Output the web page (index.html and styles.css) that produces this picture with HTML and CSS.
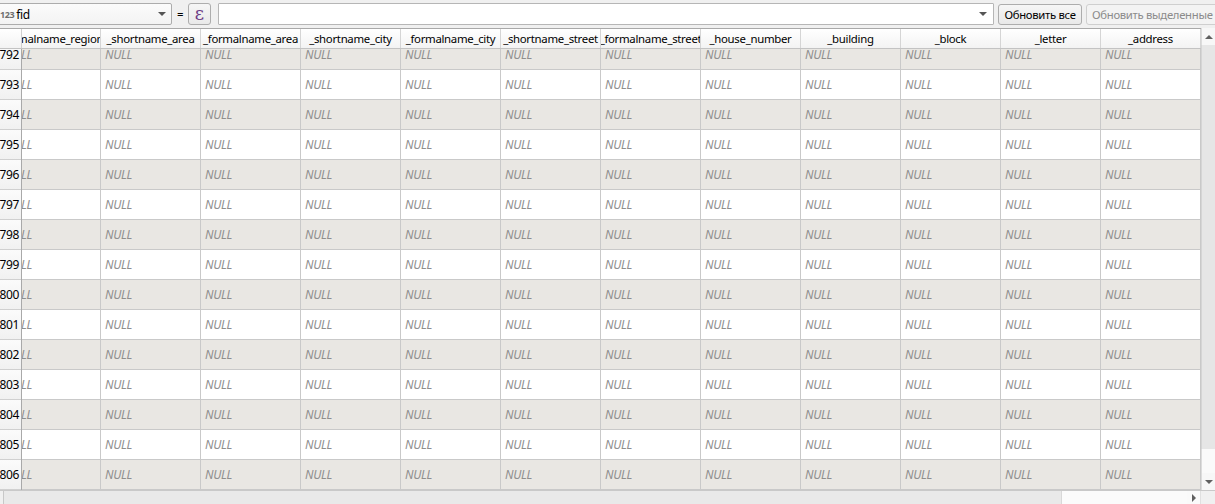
FILE: index.html
```html
<!DOCTYPE html>
<html>
<head>
<meta charset="utf-8">
<link rel="stylesheet" href="styles.css">
</head>
<body>
<div class="app">
  <div class="toolbar">
    <div class="combo field-combo">
      <span class="num">123</span><span class="fname">fid</span>
      <span class="arrow"></span>
    </div>
    <span class="eq">=</span>
    <div class="btn eps">ε</div>
    <div class="combo expr">
      <span class="arrow"></span>
    </div>
    <div class="btn upd all">Обновить все</div>
    <div class="btn upd disabled">Обновить выделенные</div>
  </div>
  <div class="table-area">
    <div class="grid">
      <div class="hdr-row">
        <div class="corner"></div>
        <div class="hdr-view">
          <div class="hdr-inner" id="hdr"></div>
        </div>
      </div>
      <div class="body">
        <div class="vhdr-view"><div class="vhdr-inner" id="vhdr"></div></div>
        <div class="data-view"><div class="data-inner" id="data"></div></div>
      </div>
    </div>
    <div class="vscroll">
      <div class="sb-btn up"><span class="tri-up"></span></div>
      <div class="vthumb"></div>
      <div class="vtrack"></div>
      <div class="sb-btn down"><span class="tri-down"></span></div>
    </div>
  </div>
  <div class="hscroll">
    <div class="hleft"></div>
    <div class="hthumb"></div>
    <div class="htrack"></div>
    <div class="sb-btn right"><span class="tri-right"></span></div>
    <div class="sb-corner"></div>
  </div>
</div>
<script src="app.js"></script>
</body>
</html>
```
FILE: app.js
```js
var cols = ["_formalname_region","_shortname_area","_formalname_area","_shortname_city","_formalname_city","_shortname_street","_formalname_street","_house_number","_building","_block","_letter","_address"];
var hdr = document.getElementById("hdr");
cols.forEach(function(c){
  var d = document.createElement("div");
  d.className = "hcell";
  d.innerHTML = "<span>" + c + "</span>";
  hdr.appendChild(d);
});
var vhdr = document.getElementById("vhdr");
var data = document.getElementById("data");
for (var r = 792; r <= 806; r++) {
  var alt = (r % 2 === 0) ? " alt" : "";
  var v = document.createElement("div");
  v.className = "vcell";
  v.textContent = String(r);
  vhdr.appendChild(v);
  var row = document.createElement("div");
  row.className = "drow" + alt;
  for (var i = 0; i < cols.length; i++) {
    var c = document.createElement("div");
    c.className = "dcell";
    c.textContent = "NULL";
    row.appendChild(c);
  }
  data.appendChild(row);
}
```
FILE: styles.css
```css
html, body {
  margin: 0;
  padding: 0;
  overflow: hidden;
  background: #f0f0f0;
}
.app {
  width: 1215px;
  height: 504px;
  overflow: hidden;
  font-family: "Noto Sans", "Open Sans", sans-serif;
  font-size: 11.4px;
  color: #000;
  display: flex;
  flex-direction: column;
}
.toolbar {
  height: 28px;
  box-sizing: border-box;
  padding-top: 3px;
  display: flex;
  align-items: flex-start;
  flex: none;
  white-space: nowrap;
}
.combo {
  height: 22px;
  box-sizing: border-box;
  border: 1px solid #acacac;
  border-radius: 2px;
  background: linear-gradient(#fbfbfb, #f3f3f3);
  display: flex;
  align-items: center;
  flex: none;
}
.field-combo {
  width: 175px;
  margin-left: -3px;
  padding-left: 2px;
}
.num {
  font-size: 9px;
  font-weight: bold;
  color: #6e6e6e;
  letter-spacing: -0.4px;
}
.fname {
  margin-left: 2px;
  font-size: 12px;
  letter-spacing: -0.3px;
}
.arrow {
  margin-left: auto;
  margin-right: 5px;
  width: 0;
  height: 0;
  border-left: 4px solid transparent;
  border-right: 4px solid transparent;
  border-top: 4px solid #555;
}
.eq {
  margin-left: 5px;
  width: 9px;
  line-height: 22px;
  flex: none;
}
.btn {
  height: 22px;
  box-sizing: border-box;
  border: 1px solid #adadad;
  border-radius: 3px;
  background: linear-gradient(#f6f6f6, #e9e9e9);
  display: flex;
  align-items: center;
  justify-content: center;
  flex: none;
  white-space: nowrap;
}
.eps {
  width: 23px;
  margin-left: 2px;
  color: #6c3a84;
  font-family: "DejaVu Serif", serif;
  font-size: 18px;
  padding-bottom: 2px;
}
.expr {
  width: 776px;
  margin-left: 7px;
  background: #fff;
  border-color: #b6b6b6;
  border-radius: 1px;
}
.expr .arrow {
  margin-right: 6px;
}
.upd {
  margin-left: 4px;
  letter-spacing: -0.3px;
  height: 21px;
  margin-top: 1px;
  font-size: 11.3px;
  overflow: hidden;
}
.all {
  width: 84px;
}
.disabled {
  color: #8b8b8b;
  border-color: #cfcfcf;
  background: #f3f3f3;
  width: 132px;
  justify-content: flex-start;
  padding-left: 5px;
}
.table-area {
  display: flex;
  flex: none;
  height: 462px;
}
.grid {
  width: 1201px;
  flex: none;
  display: flex;
  flex-direction: column;
  background: #fff;
}
.hdr-row {
  display: flex;
  height: 21px;
  box-sizing: border-box;
  border-top: 1px solid #a9a9a9;
  border-bottom: 1px solid #c3c3c3;
  background: linear-gradient(#ffffff, #f3f3f3);
  flex: none;
}
.corner {
  width: 22px;
  flex: none;
  box-sizing: border-box;
  border-right: 1px solid #d0d0d0;
}
.hdr-view {
  flex: 1;
  overflow: hidden;
}
.hdr-inner {
  display: flex;
  margin-left: -21px;
}
.hcell {
  width: 100px;
  flex: none;
  height: 19px;
  box-sizing: border-box;
  border-right: 1px solid #d5d5d5;
  display: flex;
  justify-content: center;
  align-items: center;
  overflow: hidden;
  white-space: nowrap;
  letter-spacing: -0.3px;
}
.hcell span {
  flex: none;
}
.body {
  display: flex;
  height: 441px;
  flex: none;
}
.vhdr-view {
  width: 22px;
  flex: none;
  overflow: hidden;
  box-sizing: border-box;
  border-right: 1px solid #a9a9a9;
  background: #f7f7f7;
}
.vhdr-inner {
  margin-top: -9px;
}
.vcell {
  height: 30px;
  box-sizing: border-box;
  border-bottom: 1px solid #d0d0d0;
  display: flex;
  justify-content: flex-end;
  align-items: center;
  padding-right: 2px;
  white-space: nowrap;
  overflow: hidden;
  font-size: 12px;
  letter-spacing: -0.4px;
  background: linear-gradient(#fbfbfb, #f1f1f1);
}
.data-view {
  flex: 1;
  overflow: hidden;
}
.data-inner {
  margin-top: -9px;
  margin-left: -21px;
}
.drow {
  display: flex;
  height: 30px;
}
.drow.alt {
  background: #e9e7e3;
}
.dcell {
  width: 100px;
  flex: none;
  box-sizing: border-box;
  border-right: 1px solid #c9c9c9;
  border-bottom: 1px solid #c9c9c9;
  padding-left: 4px;
  display: flex;
  align-items: center;
  font-style: italic;
  font-size: 12px;
  color: #8e8e8e;
  letter-spacing: -0.3px;
}
.vscroll {
  width: 17px;
  flex: none;
  display: flex;
  flex-direction: column;
  background: #f7f7f7;
  border-left: 1px solid #dcdcdc;
  box-sizing: border-box;
}
.sb-btn {
  height: 17px;
  flex: none;
  display: flex;
  align-items: center;
  justify-content: center;
  padding-right: 3px;
}
.vthumb {
  height: 404px;
  flex: none;
  background: #e6e6e6;
  border-left: 1px solid #d5d5d5;
  margin-left: -1px;
}
.vtrack {
  flex: 1;
  background: #fafafa;
}
.tri-up {
  width: 0; height: 0;
  border-left: 4px solid transparent;
  border-right: 4px solid transparent;
  border-bottom: 4px solid #606060;
}
.tri-down {
  width: 0; height: 0;
  border-left: 4px solid transparent;
  border-right: 4px solid transparent;
  border-top: 4px solid #606060;
}
.tri-right {
  width: 0; height: 0;
  border-top: 4px solid transparent;
  border-bottom: 4px solid transparent;
  border-left: 4px solid #606060;
}
.hscroll {
  display: flex;
  height: 17px;
  flex: none;
  border-top: 1px solid #c9c9c9;
  box-sizing: border-box;
  background: #fafafa;
}
.hleft {
  width: 3px;
  flex: none;
  border-right: 1px solid #c8c8c8;
  background: #f0f0f0;
}
.hthumb {
  width: 1057px;
  flex: none;
  background: #e9e9e9;
  border-right: 1px solid #d8d8d8;
}
.htrack {
  flex: 1;
  background: #fbfbfb;
}
.hscroll .right {
  width: 13px;
  height: 14px;
  padding-right: 0;
  border-right: 1px solid #e0e0e0;
}
.sb-corner {
  width: 14px;
  flex: none;
  background: #f0f0f0;
}
```
